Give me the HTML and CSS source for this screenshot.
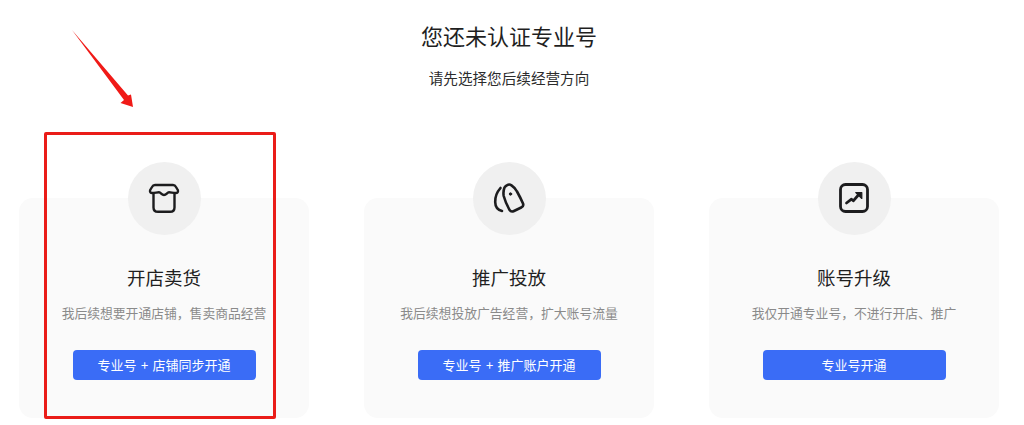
FILE: index.html
```html
<!DOCTYPE html>
<html lang="zh-CN">
<head>
<meta charset="utf-8">
<title>您还未认证专业号</title>
<link rel="stylesheet" href="styles.css">
</head>
<body>
<main class="page">
  <h1 class="title">您还未认证专业号</h1>
  <p class="subtitle">请先选择您后续经营方向</p>
  <section class="cards">
    <article class="card">
      <div class="badge">
        <svg class="icon" viewBox="0 0 30 30" fill="none" stroke="#1c1c1e" stroke-width="2.400" stroke-linecap="round" stroke-linejoin="round">
          <path d="M6 2H24C25.500 2 26.300 2.600 27 4L28.800 7C29.500 8.800 28.500 10 26.700 10C24 10 22 9.300 20 9.300C18 9.300 17.500 12 15 12C12.500 12 12 9.300 10 9.300C8 9.300 6 10 3.300 10C1.500 10 .5 8.800 1.200 7L3 4C3.700 2.600 4.500 2 6 2z"/>
          <path d="M4.500 10.500V24.500C4.500 27.500 6 28.800 9 28.800H21C24 28.800 25.500 27.500 25.500 24.500V10.500"/>
        </svg>
      </div>
      <h2 class="card-title">开店卖货</h2>
      <p class="card-desc">我后续想要开通店铺，售卖商品经营</p>
      <button class="card-btn" type="button">专业号 + 店铺同步开通</button>
    </article>
    <article class="card">
      <div class="badge">
        <svg class="icon" viewBox="0 0 30 30" fill="none" stroke="#1c1c1e" stroke-width="2.600" stroke-linecap="round" stroke-linejoin="round">
          <path d="M6.500 5C3 9 1 14 1.200 19C1.300 24 3.500 27 8 28"/>
          <path d="M13 2.300C14.500 1.200 16 1.300 17.500 2.300C20 4 21.800 6 23 8.500C25.500 13 27.500 17 29 20.500C29.700 22.500 29 23.700 27.200 24.500L20 28C18 29 16.500 28.500 15.500 26.800C13 22.500 10.800 17 9.700 13C9.200 10 9.700 6.500 10.500 4.500C11 3.500 12 3 13 2.300z"/>
          <circle cx="16.500" cy="11" r="1.200" fill="#1c1c1e" stroke-width="1"/>
        </svg>
      </div>
      <h2 class="card-title">推广投放</h2>
      <p class="card-desc">我后续想投放广告经营，扩大账号流量</p>
      <button class="card-btn" type="button">专业号 + 推广账户开通</button>
    </article>
    <article class="card">
      <div class="badge">
        <svg class="icon" viewBox="0 0 30 30" fill="none" stroke="#1c1c1e" stroke-linecap="round" stroke-linejoin="round">
          <rect x="1.500" y="1.500" width="27" height="27" rx="5" stroke-width="2.800"/>
          <path d="M7.500 20l5-3.800 1.800 1.600 5.500-6.300" stroke-width="2.800"/>
          <path d="M16.800 9.500h6v6z" fill="#1c1c1e" stroke-width="1.200"/>
        </svg>
      </div>
      <h2 class="card-title">账号升级</h2>
      <p class="card-desc">我仅开通专业号，不进行开店、推广</p>
      <button class="card-btn" type="button">专业号开通</button>
    </article>
  </section>
  <div class="highlight"></div>
  <svg class="arrow" viewBox="0 0 64 80" fill="#f01a17">
    <path d="M0 0L56 65.500 59 64.500 61 77 48.500 73 52 70z"/>
  </svg>
</main>
</body>
</html>
```

FILE: styles.css
```css
* {
  box-sizing: border-box;
}

html,
body {
  margin: 0;
  padding: 0;
  background: #fff;
}

body {
  font-family: "Microsoft YaHei", "Noto Sans CJK SC", "Liberation Sans", sans-serif;
  overflow: hidden;
}

.page {
  position: relative;
  width: 1024px;
  height: 425px;
  padding: 19px 6px 0 0;
  text-align: center;
}

.title {
  margin: 0;
  font-size: 22px;
  line-height: 32px;
  font-weight: 400;
  color: #1f1f1f;
}

.subtitle {
  margin: 16px 0 0;
  font-size: 14.600px;
  line-height: 22px;
  color: #2c2c2c;
}

.cards {
  display: flex;
  justify-content: center;
  gap: 55px;
  margin-top: 109px;
}

.card {
  display: flex;
  flex-direction: column;
  align-items: center;
  width: 290px;
  height: 220px;
  background: #fafafa;
  border-radius: 14px;
}

.badge {
  display: flex;
  align-items: center;
  justify-content: center;
  flex: none;
  width: 73px;
  height: 73px;
  margin-top: -36px;
  border-radius: 50%;
  background: #f0f0f0;
}

.icon {
  width: 30px;
  height: 30px;
  margin-bottom: 1px;
  overflow: visible;
}

.card-title {
  margin: 30px 0 0;
  font-size: 18.500px;
  line-height: 24px;
  font-weight: 400;
  color: #1f1f1f;
}

.card-desc {
  margin: 14px 0 0;
  font-size: 12.800px;
  line-height: 20px;
  color: #8a8a8a;
  white-space: nowrap;
}

.card-btn {
  width: 183px;
  height: 30px;
  margin-top: 27px;
  padding: 0 0 2px;
  border: 0;
  border-radius: 4px;
  background: #3a6cf6;
  color: #fff;
  font-family: inherit;
  font-size: 13px;
  word-spacing: 1.500px;
  white-space: nowrap;
}

.highlight {
  position: absolute;
  left: 44px;
  top: 132px;
  width: 232px;
  height: 287px;
  border: 3px solid #ea1c18;
  border-radius: 2px;
}

.arrow {
  position: absolute;
  left: 72px;
  top: 30px;
  width: 64px;
  height: 80px;
}
```
